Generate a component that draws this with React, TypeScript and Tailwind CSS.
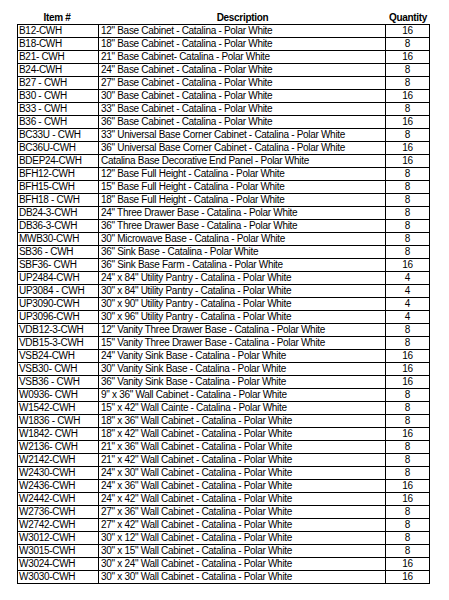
const rows: [string, string, number][] = [
  ['B12-CWH', '12" Base Cabinet - Catalina - Polar White', 16],
  ['B18-CWH', '18" Base Cabinet - Catalina - Polar White', 8],
  ['B21- CWH', '21" Base Cabinet- Catalina - Polar White', 16],
  ['B24-CWH', '24" Base Cabinet - Catalina - Polar White', 8],
  ['B27 - CWH', '27" Base Cabinet - Catalina - Polar White', 8],
  ['B30 - CWH', '30" Base Cabinet - Catalina - Polar White', 16],
  ['B33 - CWH', '33" Base Cabinet - Catalina - Polar White', 8],
  ['B36 - CWH', '36" Base Cabinet - Catalina - Polar White', 16],
  ['BC33U - CWH', '33" Universal Base Corner Cabinet - Catalina - Polar White', 8],
  ['BC36U-CWH', '36" Universal Base Corner Cabinet - Catalina - Polar White', 16],
  ['BDEP24-CWH', 'Catalina Base Decorative End Panel - Polar White', 16],
  ['BFH12-CWH', '12" Base Full Height - Catalina - Polar White', 8],
  ['BFH15-CWH', '15" Base Full Height - Catalina - Polar White', 8],
  ['BFH18 - CWH', '18" Base Full Height - Catalina - Polar White', 8],
  ['DB24-3-CWH', '24" Three Drawer Base - Catalina - Polar White', 8],
  ['DB36-3-CWH', '36" Three Drawer Base - Catalina - Polar White', 8],
  ['MWB30-CWH', '30" Microwave Base - Catalina - Polar White', 8],
  ['SB36 - CWH', '36" Sink Base - Catalina - Polar White', 8],
  ['SBF36- CWH', '36" Sink Base Farm - Catalina - Polar White', 16],
  ['UP2484-CWH', '24" x 84" Utility Pantry - Catalina - Polar White', 4],
  ['UP3084 - CWH', '30" x 84" Utility Pantry - Catalina - Polar White', 4],
  ['UP3090-CWH', '30" x 90" Utility Pantry - Catalina - Polar White', 4],
  ['UP3096-CWH', '30" x 96" Utility Pantry - Catalina - Polar White', 4],
  ['VDB12-3-CWH', '12" Vanity Three Drawer Base - Catalina - Polar White', 8],
  ['VDB15-3-CWH', '15" Vanity Three Drawer Base - Catalina - Polar White', 8],
  ['VSB24-CWH', '24" Vanity Sink Base - Catalina - Polar White', 16],
  ['VSB30- CWH', '30" Vanity Sink Base - Catalina - Polar White', 16],
  ['VSB36 - CWH', '36" Vanity Sink Base - Catalina - Polar White', 16],
  ['W0936- CWH', '9" x 36" Wall Cabinet - Catalina - Polar White', 8],
  ['W1542-CWH', '15" x 42" Wall Cainte - Catalina - Polar White', 8],
  ['W1836 - CWH', '18" x 36" Wall Cabinet - Catalina - Polar White', 8],
  ['W1842- CWH', '18" x 42" Wall Cabinet - Catalina - Polar White', 16],
  ['W2136- CWH', '21" x 36" Wall Cabinet - Catalina - Polar White', 8],
  ['W2142-CWH', '21" x 42" Wall Cabinet - Catalina - Polar White', 8],
  ['W2430-CWH', '24" x 30" Wall Cabinet - Catalina - Polar White', 8],
  ['W2436-CWH', '24" x 36" Wall Cabinet - Catalina - Polar White', 16],
  ['W2442-CWH', '24" x 42" Wall Cabinet - Catalina - Polar White', 16],
  ['W2736-CWH', '27" x 36" Wall Cabinet - Catalina - Polar White', 8],
  ['W2742-CWH', '27" x 42" Wall Cabinet - Catalina - Polar White', 8],
  ['W3012-CWH', '30" x 12" Wall Cabinet - Catalina - Polar White', 8],
  ['W3015-CWH', '30" x 15" Wall Cabinet - Catalina - Polar White', 8],
  ['W3024-CWH', '30" x 24" Wall Cabinet - Catalina - Polar White', 16],
  ['W3030-CWH', '30" x 30" Wall Cabinet - Catalina - Polar White', 16],
];

export default function App() {
  return (
    <div className="w-[449px] h-[600px] bg-white pt-[12px] pl-[17px] font-['Liberation_Sans',Arial,sans-serif] text-[10px] leading-[12px] tracking-[-0.3px] text-black">
      {/* Header */}
      <div className="grid grid-cols-[82px_287px_44px] h-[12px] font-bold">
        <div className="text-center pr-[2px]">Item #</div>
        <div className="text-center">Description</div>
        <div className="text-center">Quantity</div>
      </div>

      {/* Table body */}
      <div className="w-[413px] border-l border-t border-black">
        {rows.map(([item, desc, qty]) => (
          <div key={item} className="grid grid-cols-[81px_287px_44px] h-[13px]">
            <div className="border-r border-b border-black pl-[1px] whitespace-nowrap overflow-hidden">{item}</div>
            <div className="border-r border-b border-black pl-[2px] whitespace-nowrap overflow-hidden">{desc}</div>
            <div className="border-r border-b border-black text-center">{qty}</div>
          </div>
        ))}
      </div>
    </div>
  );
}
